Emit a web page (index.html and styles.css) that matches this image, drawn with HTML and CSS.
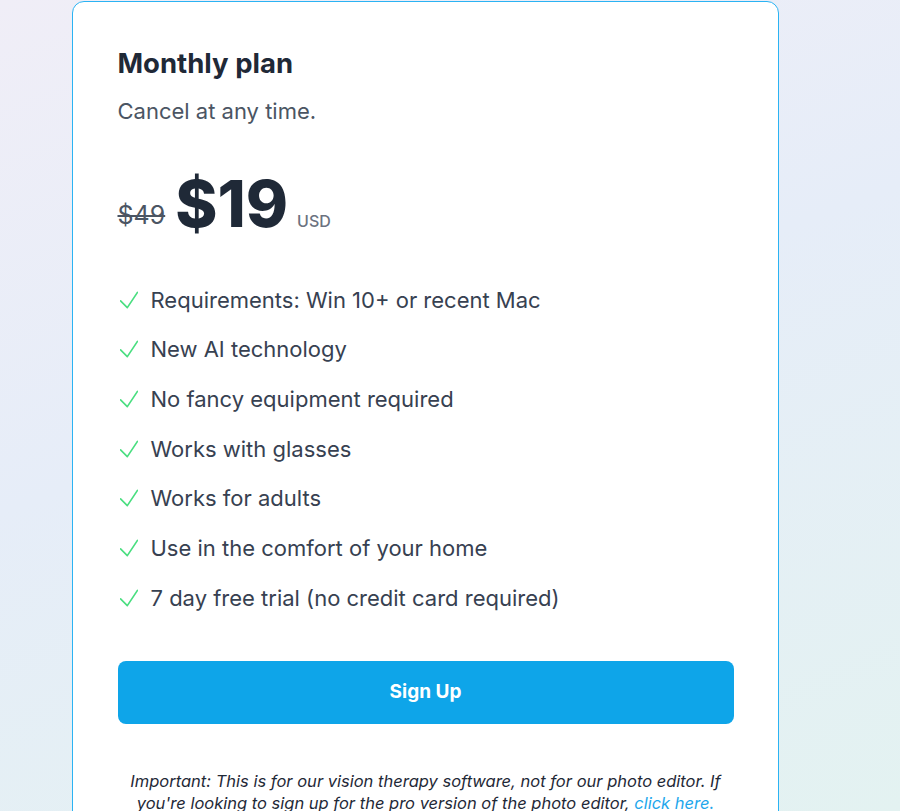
FILE: index.html
```html
<!DOCTYPE html>
<html lang="en">
  <head>
    <meta charset="UTF-8" />
    <meta name="viewport" content="width=device-width, initial-scale=1.0" />
    <title>Pricing</title>
    <link rel="stylesheet" href="styles.css">
  </head>
  <body>
    <div class="plan-card">
      <h2 class="plan-title">Monthly plan</h2>
      <p class="plan-sub">Cancel at any time.</p>

      <div class="price"><span class="price-old">$49</span><span class="price-new">$19</span><span class="price-cur">USD</span></div>

      <ul class="features">
        <li><svg class="check" viewBox="4 4 16 16"><path d="M4.5 12.75l6 6 9-13.5" /></svg>Requirements: Win 10+ or recent Mac</li>
        <li><svg class="check" viewBox="4 4 16 16"><path d="M4.5 12.75l6 6 9-13.5" /></svg>New AI technology</li>
        <li><svg class="check" viewBox="4 4 16 16"><path d="M4.5 12.75l6 6 9-13.5" /></svg>No fancy equipment required</li>
        <li><svg class="check" viewBox="4 4 16 16"><path d="M4.5 12.75l6 6 9-13.5" /></svg>Works with glasses</li>
        <li><svg class="check" viewBox="4 4 16 16"><path d="M4.5 12.75l6 6 9-13.5" /></svg>Works for adults</li>
        <li><svg class="check" viewBox="4 4 16 16"><path d="M4.5 12.75l6 6 9-13.5" /></svg>Use in the comfort of your home</li>
        <li><svg class="check" viewBox="4 4 16 16"><path d="M4.5 12.75l6 6 9-13.5" /></svg>7 day free trial (no credit card required)</li>
      </ul>

      <a class="button" href="#">Sign Up</a>

      <p class="note">
        Important: This is for our vision therapy software, not for our photo editor. If
        you're looking to sign up for the pro version of the photo editor, <a href="#">click here.</a>
      </p>
    </div>
  </body>
</html>
```

FILE: styles.css
```css
html,
body {
  height: 100%;
}
body {
  font-family: Inter, "Noto Sans", sans-serif;
  margin: 0;
  padding: 1px 0 0 72px;
  background: linear-gradient(160deg, #f0eef7 0%, #e6edf8 45%, #e3f2f1 100%);
  overflow: hidden;
}
.plan-card {
  width: 616px;
  padding: 42.5px 44px 40px 44.5px;
  background-color: #fff;
  border: 1.5px solid #2bb3f3;
  border-radius: 12px;
}
.plan-title {
  margin: 0;
  font-size: 27.5px;
  line-height: 36px;
  font-weight: 700;
  color: #1f2937;
}
.plan-sub {
  margin: 15px 0 0;
  font-size: 22px;
  line-height: 30px;
  color: #4b5563;
}
.price {
  margin-top: 46px;
  font-size: 64px;
  line-height: 1;
  white-space: nowrap;
}
.price-old {
  font-size: 25px;
  color: #4b5563;
  text-decoration: line-through;
  vertical-align: 3px;
  margin-right: 10px;
}
.price-new {
  font-weight: 800;
  color: #1f2937;
  margin-right: 9px;
}
.price-cur {
  font-size: 16px;
  font-weight: 500;
  color: #6b7280;
}
.features {
  list-style: none;
  margin: 49px 0 0;
  padding: 0;
  display: flex;
  flex-direction: column;
  gap: 19.7px;
}
.features li {
  display: flex;
  align-items: center;
  gap: 13px;
  font-size: 22px;
  line-height: 30px;
  color: #374151;
}
.check {
  width: 18px;
  height: 18px;
  margin-left: 2px;
  flex-shrink: 0;
  fill: none;
  stroke: #4ade80;
  stroke-width: 1.5;
  stroke-linecap: round;
  stroke-linejoin: round;
}
.button {
  display: block;
  margin-top: 48px;
  padding: 17.5px 0;
  background-color: #0ea5e9;
  border-radius: 8px;
  color: #fff;
  text-align: center;
  text-decoration: none;
  font-size: 19px;
  line-height: 28px;
  font-weight: 700;
}
.note {
  margin: 46px 0 0;
  font-size: 16.5px;
  line-height: 22px;
  font-style: italic;
  text-align: center;
  color: #1f2937;
}
.note a {
  color: #1ea7ec;
  text-decoration: none;
}
```
